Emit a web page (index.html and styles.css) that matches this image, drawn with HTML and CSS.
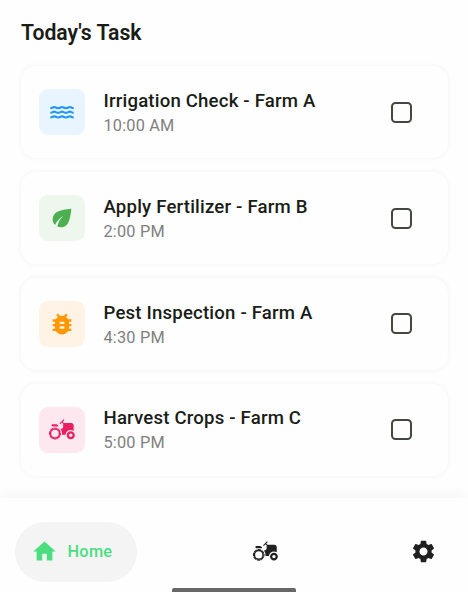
FILE: index.html
```html
<!DOCTYPE html>
<html lang="en">
<head>
<meta charset="utf-8">
<title>Today's Task</title>
<link rel="stylesheet" href="styles.css">
</head>
<body>
<svg class="defs" width="0" height="0">
  <symbol id="tractor" viewBox="0 0 24 24">
    <path d="M19.5 12c.93 0 1.78.28 2.5.76V8c0-1.1-.9-2-2-2h-6.29l-1.06-1.06 1.41-1.41-.71-.71-3.53 3.53.71.71 1.41-1.41L13 6.71V9c0 1.1-.9 2-2 2h-.54c.95 1.06 1.54 2.46 1.54 4 0 .34-.04.67-.09 1h3.14c.25-2.25 2.14-4 4.45-4z"/>
    <path d="M19.5 13c-1.93 0-3.5 1.57-3.5 3.5s1.57 3.5 3.5 3.5 3.5-1.57 3.5-3.5-1.57-3.5-3.5-3.5zm0 5c-.83 0-1.5-.67-1.5-1.5s.67-1.5 1.5-1.5 1.5.67 1.5 1.5-.67 1.5-1.5 1.5zM4 9h5c0-1.1-.9-2-2-2H4c-.55 0-1 .45-1 1s.45 1 1 1z"/>
    <circle cx="6" cy="15" r="3.85" fill="none" stroke="currentColor" stroke-width="1.3"/>
    <circle cx="6" cy="15" r="4.7" fill="none" stroke="currentColor" stroke-width=".9" stroke-dasharray="3.19 .5" stroke-dashoffset="1.6"/>
  </symbol>
</svg>
<main class="tasks">
  <h1 class="heading">Today's Task</h1>
  <article class="card">
    <div class="tile tile-water"><svg class="icon" viewBox="0 0 24 24"><g fill="none" stroke="currentColor" stroke-width="1.9"><path id="wave" d="M2 8.7c1.9 0 2.1-1 3.35-1s1.42 1 3.33 1 2.09-1 3.33-1 1.42 1 3.33 1 2.09-1 3.33-1 1.42 1 3.33 1"/><use href="#wave" y="4"/><use href="#wave" y="8"/></g></svg></div>
    <div class="info"><h2 class="title">Irrigation Check - Farm A</h2><p class="time">10:00 AM</p></div>
    <span class="check" role="checkbox" aria-checked="false"></span>
  </article>
  <article class="card">
    <div class="tile tile-leaf"><svg class="icon" viewBox="0 0 24 24"><path d="M6.05 8.05c-2.73 2.73-2.73 7.15-.02 9.88 1.47-3.4 4.09-6.24 7.36-7.93-2.77 2.34-4.71 5.61-5.39 9.32 2.6 1.23 5.8.78 7.95-1.37C19.43 14.47 20 4 20 4S9.53 4.57 6.05 8.05z"/></svg></div>
    <div class="info"><h2 class="title">Apply Fertilizer - Farm B</h2><p class="time">2:00 PM</p></div>
    <span class="check" role="checkbox" aria-checked="false"></span>
  </article>
  <article class="card">
    <div class="tile tile-bug"><svg class="icon" viewBox="0 0 24 24"><path d="M20 8h-2.81c-.45-.78-1.07-1.45-1.82-1.96L17 4.41 15.59 3l-2.17 2.17C12.96 5.06 12.49 5 12 5c-.49 0-.96.06-1.41.17L8.41 3 7 4.41l1.62 1.63C7.88 6.55 7.26 7.22 6.81 8H4v2h2.09c-.05.33-.09.66-.09 1v1H4v2h2v1c0 .34.04.67.09 1H4v2h2.81c1.04 1.79 2.97 3 5.19 3s4.15-1.21 5.19-3H20v-2h-2.09c.05-.33.09-.66.09-1v-1h2v-2h-2v-1c0-.34-.04-.67-.09-1H20V8zm-6 8h-4v-2h4v2zm0-4h-4v-2h4v2z"/></svg></div>
    <div class="info"><h2 class="title">Pest Inspection - Farm A</h2><p class="time">4:30 PM</p></div>
    <span class="check" role="checkbox" aria-checked="false"></span>
  </article>
  <article class="card">
    <div class="tile tile-harvest"><svg class="icon"><use href="#tractor"/></svg></div>
    <div class="info"><h2 class="title">Harvest Crops - Farm C</h2><p class="time">5:00 PM</p></div>
    <span class="check" role="checkbox" aria-checked="false"></span>
  </article>
</main>
<nav class="nav">
  <a class="pill"><svg class="nav-icon" viewBox="0 0 24 24"><path d="M10 20v-6h4v6h5v-8h3L12 3 2 12h3v8z"/></svg><span>Home</span></a>
  <a class="nav-link"><svg class="nav-icon"><use href="#tractor"/></svg></a>
  <a class="nav-link"><svg class="nav-icon" viewBox="0 0 24 24"><path d="M19.14 12.94c.04-.3.06-.61.06-.94 0-.32-.02-.64-.07-.94l2.03-1.58c.18-.14.23-.41.12-.61l-1.92-3.32c-.12-.22-.37-.29-.59-.22l-2.39.96c-.5-.38-1.03-.7-1.62-.94l-.36-2.54c-.04-.24-.24-.41-.48-.41h-3.84c-.24 0-.43.17-.47.41l-.36 2.54c-.59.24-1.13.57-1.62.94l-2.39-.96c-.22-.08-.47 0-.59.22L2.74 8.87c-.12.21-.08.47.12.61l2.03 1.58c-.05.3-.09.63-.09.94s.02.64.07.94l-2.03 1.58c-.18.14-.23.41-.12.61l1.92 3.32c.12.22.37.29.59.22l2.39-.96c.5.38 1.03.7 1.62.94l.36 2.54c.05.24.24.41.48.41h3.84c.24 0 .44-.17.47-.41l.36-2.54c.59-.24 1.13-.56 1.62-.94l2.39.96c.22.08.47 0 .59-.22l1.92-3.32c.12-.22.07-.47-.12-.61l-2.01-1.58zM12 15.6c-1.98 0-3.6-1.62-3.6-3.6s1.62-3.6 3.6-3.6 3.6 1.62 3.6 3.6-1.62 3.6-3.6 3.6z"/></svg></a>
  <span class="handle"></span>
</nav>
</body>
</html>
```
FILE: styles.css
```css
* { box-sizing: border-box; margin: 0; }
body {
  height: 592px;
  display: flex;
  flex-direction: column;
  overflow: hidden;
  background: #fefefe;
  color: #191d17;
  font-family: Roboto, "Liberation Sans", sans-serif;
}
svg { fill: currentColor; flex: none; }
.defs { position: absolute; }
.tasks {
  height: 498px;
  flex: none;
  padding: 19px 20.5px 0;
  display: flex;
  flex-direction: column;
  gap: 13.6px;
}
.heading {
  height: 28px;
  margin: 0 0 5.6px 0.5px;
  font-size: 21.2px;
  line-height: 28px;
  font-weight: 600;
}
.card {
  height: 92.2px;
  flex: none;
  display: flex;
  align-items: center;
  padding: 0 36px 0 18.5px;
  border-radius: 15px;
  background: #fefefe;
  box-shadow: 0 0 5px rgba(0, 0, 0, 0.055);
}
.tile {
  width: 46px;
  height: 46px;
  display: grid;
  place-items: center;
  border-radius: 9px;
}
.icon { width: 28px; height: 28px; }
.tile-water { background: #e8f4fe; color: #2196f3; }
.tile-leaf { background: #edf7ed; color: #4caf50; }
.tile-bug { background: #fff3e5; color: #ff9800; }
.tile-harvest { background: #fde8ef; color: #e91e63; }
.info { flex: 1; margin-left: 18.5px; }
.title {
  padding-top: 0.6px;
  font-size: 18.6px;
  line-height: 26px;
  font-weight: 500;
  letter-spacing: 0.19px;
}
.time {
  color: #808080;
  font-size: 16.3px;
  line-height: 23px;
  letter-spacing: 0.2px;
}
.check {
  width: 21px;
  height: 21px;
  border: 2px solid #43483f;
  border-radius: 4.5px;
}
.nav {
  position: relative;
  flex: 1;
  display: flex;
  align-items: center;
  justify-content: space-between;
  padding: 13px 31px 0 15px;
  background: #fefefe;
  box-shadow: 0 0 16px rgba(0, 0, 0, 0.06);
  color: #202020;
}
.nav-icon { width: 27px; height: 27px; display: block; }
.nav-link:nth-child(2) { margin-right: 16px; }
.pill {
  width: 122px;
  height: 60px;
  display: flex;
  align-items: center;
  gap: 9.5px;
  padding-left: 16px;
  border-radius: 30px;
  background: #f4f4f4;
  color: #4ade80;
  font-size: 16.3px;
  font-weight: 500;
  letter-spacing: 0.3px;
}
.handle {
  position: absolute;
  left: 172px;
  bottom: 0;
  width: 124px;
  height: 4px;
  border-radius: 2px 2px 0 0;
  background: #686868;
}
```
